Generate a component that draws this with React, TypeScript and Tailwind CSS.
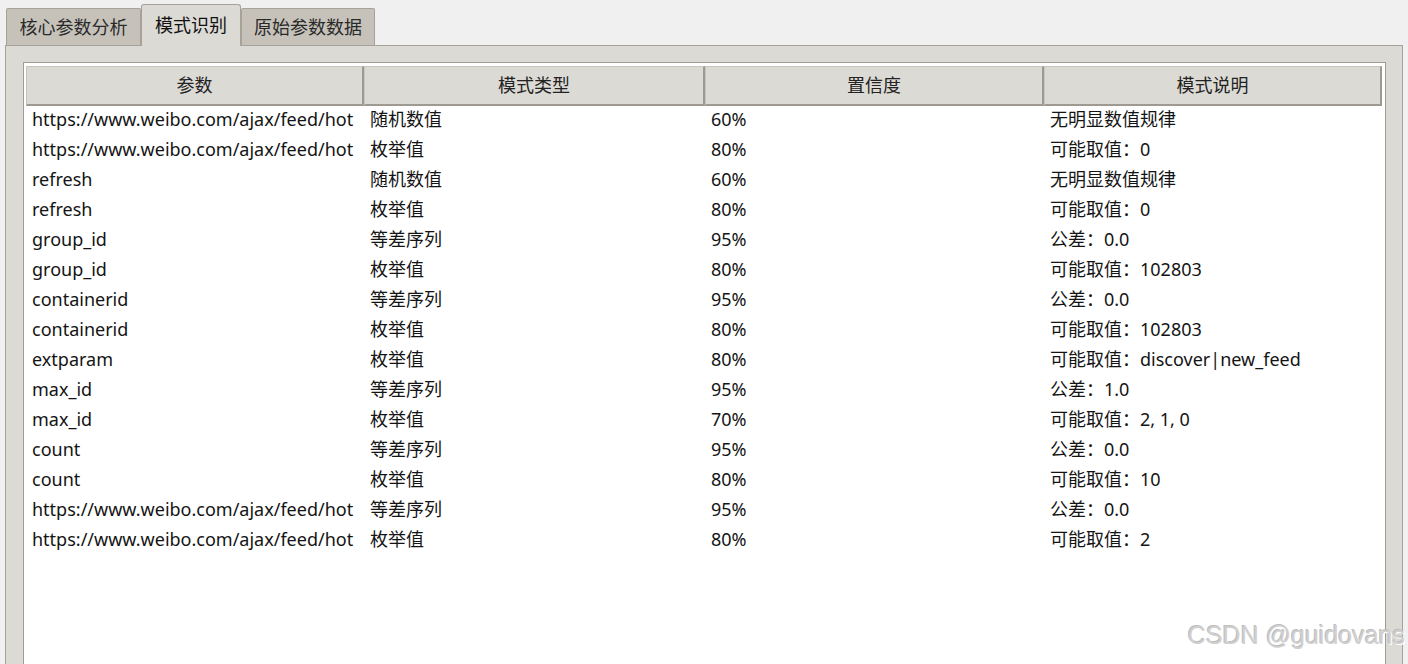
import React from "react";

type Row = {
  param: string;
  kind:  string;
  conf:  string;
  desc:  string;
};

const URL = "https://www.weibo.com/ajax/feed/hot";

const ROWS: Row[] = [
  { param: URL,           kind: "随机数值", conf: "60%", desc: "无明显数值规律" },
  { param: URL,           kind: "枚举值",   conf: "80%", desc: "可能取值：0" },
  { param: "refresh",     kind: "随机数值", conf: "60%", desc: "无明显数值规律" },
  { param: "refresh",     kind: "枚举值",   conf: "80%", desc: "可能取值：0" },
  { param: "group_id",    kind: "等差序列", conf: "95%", desc: "公差：0.0" },
  { param: "group_id",    kind: "枚举值",   conf: "80%", desc: "可能取值：102803" },
  { param: "containerid", kind: "等差序列", conf: "95%", desc: "公差：0.0" },
  { param: "containerid", kind: "枚举值",   conf: "80%", desc: "可能取值：102803" },
  { param: "extparam",    kind: "枚举值",   conf: "80%", desc: "可能取值：discover|new_feed" },
  { param: "max_id",      kind: "等差序列", conf: "95%", desc: "公差：1.0" },
  { param: "max_id",      kind: "枚举值",   conf: "70%", desc: "可能取值：2, 1, 0" },
  { param: "count",       kind: "等差序列", conf: "95%", desc: "公差：0.0" },
  { param: "count",       kind: "枚举值",   conf: "80%", desc: "可能取值：10" },
  { param: URL,           kind: "等差序列", conf: "95%", desc: "公差：0.0" },
  { param: URL,           kind: "枚举值",   conf: "80%", desc: "可能取值：2" },
];

const HEADERS = ["参数", "模式类型", "置信度", "模式说明"];

// column widths follow the screenshot (px)
const COLS = "grid grid-cols-[338px_341px_339px_338px]";

export default function App() {
  return (
    <div
      className="relative w-[1408px] h-[664px] overflow-hidden bg-[#f0f0f0] text-[18px] text-[#141414] flex flex-col"
      style={{ fontFamily: '"Noto Sans", "Noto Sans CJK SC", sans-serif' }}
    >
      {/* Tab strip */}
      <div className="flex items-end pl-[6px] pt-[3px] h-[45px] relative z-10">
        <div className="h-[37px] w-[135px] flex items-center justify-center bg-[#c6c2ba] border border-[#a6a29a] border-b-0 rounded-t-[2px] text-[#2a2a2a]">
          核心参数分析
        </div>
        <div className="h-[42px] w-[100px] -mb-px flex items-center justify-center bg-[#dcdad5] border border-[#a6a29a] border-b-0 rounded-t-[3px] text-[#111]">
          模式识别
        </div>
        <div className="h-[37px] w-[134px] flex items-center justify-center bg-[#c6c2ba] border border-[#a6a29a] border-b-0 rounded-t-[2px] text-[#2a2a2a]">
          原始参数数据
        </div>
      </div>

      {/* Tab panel */}
      <div className="flex-1 ml-[5px] mr-[5px] border border-[#a6a29a] border-b-0 bg-[#dcdad5] pl-[17px] pr-[16px] pt-[16px] flex flex-col">
        <div className="flex-1 border border-[#a09c94] border-b-0 bg-white pl-[2px] pt-[3px] flex flex-col">
          {/* Header */}
          <div className={`${COLS} h-[40px]`}>
            {HEADERS.map((h) => (
              <div
                key={h}
                className="flex items-center justify-center bg-[#dcdad5] border border-t-[#c8c5bf] border-l-[#c8c5bf] border-r-[#9e9a92] border-b-[#9e9a92] border-r-2 border-b-2 text-[#222]"
              >
                {h}
              </div>
            ))}
          </div>

          {/* Rows */}
          <div className="flex flex-col">
            {ROWS.map((r, i) => (
              <div key={i} className={`${COLS} h-[30px] items-center pb-[3px]`}>
                <div className="pl-[6px] whitespace-nowrap overflow-hidden">{r.param}</div>
                <div className="pl-[6px] whitespace-nowrap">{r.kind}</div>
                <div className="pl-[6px] whitespace-nowrap">{r.conf}</div>
                <div className="pl-[6px] whitespace-nowrap">{r.desc}</div>
              </div>
            ))}
          </div>
        </div>
      </div>

      {/* Watermark */}
      <div
        className="absolute right-[3px] bottom-[10px] text-[25px] text-[#cfcfcf] whitespace-nowrap"
        style={{ fontFamily: '"Liberation Sans", Arial, sans-serif', textShadow: "1px 1px 0 #ffffff, -1px -1px 0 #bdbdbd" }}
      >
        CSDN @guidovans
      </div>
    </div>
  );
}
